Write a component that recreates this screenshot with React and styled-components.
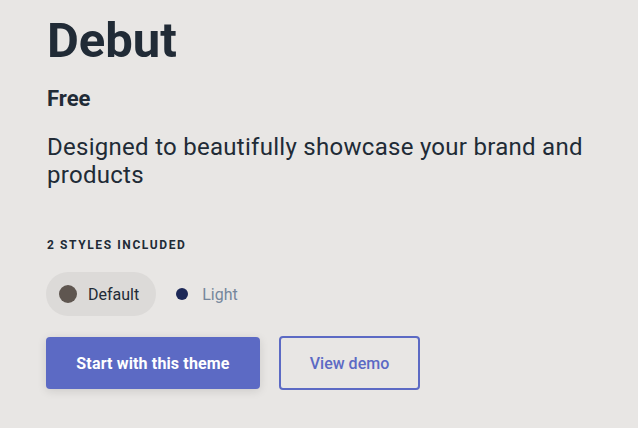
import styled, { createGlobalStyle } from "styled-components";

const GlobalStyle = createGlobalStyle`
  html, body {
    margin: 0;
    padding: 0;
    background: #e8e6e4;
  }
  body {
    font-family: Roboto, "Liberation Sans", Arial, sans-serif;
    color: #212b36;
  }
`;

const styles = [
  { name: "Default", color: "#5f5650", size: 18, active: true },
  { name: "Light", color: "#1c2857", size: 12, active: false },
];

const App = () => {
  return (
    <>
      <GlobalStyle />
      <Page>
        <Title>Debut</Title>
        <Price>Free</Price>
        <Description>
          Designed to beautifully showcase your brand and products
        </Description>
        <StylesLabel>2 styles included</StylesLabel>
        <StyleList>
          {styles.map((item) => (
            <StyleOption key={item.name} $active={item.active}>
              <Swatch $color={item.color} $size={item.size} />
              <StyleName $active={item.active}>{item.name}</StyleName>
            </StyleOption>
          ))}
        </StyleList>
        <Actions>
          <PrimaryButton>Start with this theme</PrimaryButton>
          <SecondaryButton>View demo</SecondaryButton>
        </Actions>
      </Page>
    </>
  );
};

const Page = styled.div`
  width: 638px;
  height: 428px;
  box-sizing: border-box;
  padding: 12px 30px 0 46px;
  display: flex;
  flex-direction: column;
  align-items: flex-start;
  overflow: hidden;
`;
const Title = styled.h1`
  margin: 0 0 0 1px;
  font-size: 49px;
  font-weight: 700;
  line-height: 58px;
  color: #212b36;
`;
const Price = styled.div`
  margin: 16px 0 0 1px;
  font-size: 22px;
  font-weight: 700;
  line-height: 26px;
`;
const Description = styled.p`
  margin: 21px 0 0 1px;
  font-size: 24px;
  font-weight: 400;
  line-height: 28px;
  letter-spacing: 0.28px;
  color: #212b36;
`;
const StylesLabel = styled.div`
  margin: 49px 0 0 1px;
  font-size: 12px;
  font-weight: 700;
  letter-spacing: 1.6px;
  text-transform: uppercase;
  line-height: 14px;
  color: #212b36;
`;
const StyleList = styled.div`
  display: flex;
  align-items: center;
  gap: 4px;
  margin-top: 20px;
`;
const StyleOption = styled.div`
  display: flex;
  align-items: center;
  gap: 11px;
  height: 44px;
  padding: 0 17px 0 13px;
  border-radius: 22px;
  background: ${(p) => (p.$active ? "#dcdad8" : "transparent")};
`;
const Swatch = styled.span`
  width: ${(p) => p.$size}px;
  height: ${(p) => p.$size}px;
  border-radius: 50%;
  background: ${(p) => p.$color};
  margin: 0 ${(p) => (18 - p.$size) / 2}px;
`;
const StyleName = styled.span`
  font-size: 16px;
  color: ${(p) => (p.$active ? "#212b36" : "#75869c")};
`;
const Actions = styled.div`
  display: flex;
  align-items: flex-start;
  gap: 19px;
  margin-top: 21px;
`;
const PrimaryButton = styled.button`
  width: 214px;
  height: 52px;
  border: none;
  border-radius: 4px;
  background: #5c6ac4;
  color: #fff;
  font-family: Roboto, sans-serif;
  font-size: 16px;
  font-weight: 700;
  letter-spacing: 0.15px;
  box-shadow: 0 2px 10px rgba(0, 0, 0, 0.12);
  cursor: pointer;
`;
const SecondaryButton = styled.button`
  width: 141px;
  height: 54px;
  margin-top: -1px;
  border: 2px solid #5c6ac4;
  border-radius: 4px;
  background: transparent;
  color: #5c6ac4;
  font-family: Roboto, sans-serif;
  font-size: 16px;
  font-weight: 500;
  cursor: pointer;
`;

export default App;
